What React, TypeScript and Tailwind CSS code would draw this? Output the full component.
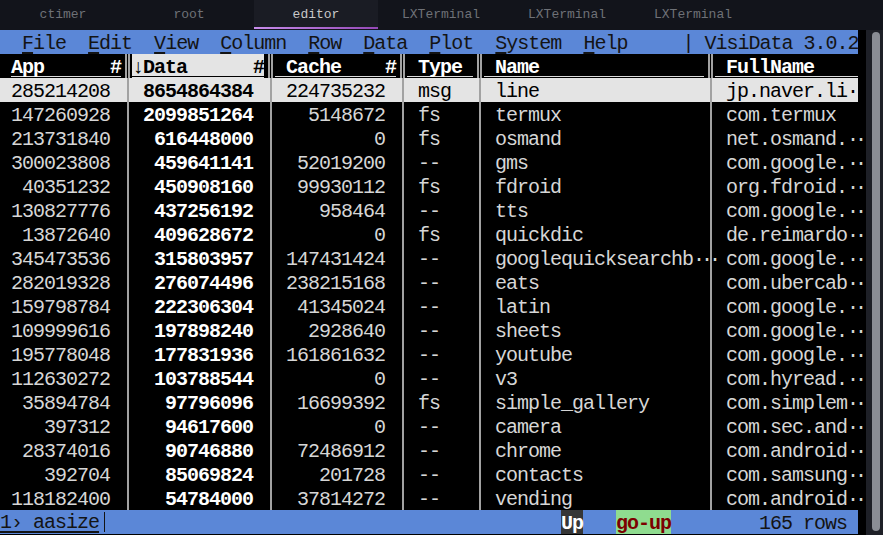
const tabs = ["ctimer", "root", "editor", "LXTerminal", "LXTerminal", "LXTerminal"];

// app, data, cache, type, name, fullname  (trailing "…" = truncated)
const rows: string[][] = [
  ["285214208", "8654864384", "224735232", "msg", "line", "jp.naver.li…"],
  ["147260928", "2099851264", "5148672", "fs", "termux", "com.termux"],
  ["213731840", "616448000", "0", "fs", "osmand", "net.osmand.…"],
  ["300023808", "459641141", "52019200", "--", "gms", "com.google.…"],
  ["40351232", "450908160", "99930112", "fs", "fdroid", "org.fdroid.…"],
  ["130827776", "437256192", "958464", "--", "tts", "com.google.…"],
  ["13872640", "409628672", "0", "fs", "quickdic", "de.reimardo…"],
  ["345473536", "315803957", "147431424", "--", "googlequicksearchb…", "com.google.…"],
  ["282019328", "276074496", "238215168", "--", "eats", "com.ubercab…"],
  ["159798784", "222306304", "41345024", "--", "latin", "com.google.…"],
  ["109999616", "197898240", "2928640", "--", "sheets", "com.google.…"],
  ["195778048", "177831936", "161861632", "--", "youtube", "com.google.…"],
  ["112630272", "103788544", "0", "--", "v3", "com.hyread.…"],
  ["35894784", "97796096", "16699392", "fs", "simple_gallery", "com.simplem…"],
  ["397312", "94617600", "0", "--", "camera", "com.sec.and…"],
  ["28374016", "90746880", "72486912", "--", "chrome", "com.android…"],
  ["392704", "85069824", "201728", "--", "contacts", "com.samsung…"],
  ["118182400", "54784000", "37814272", "--", "vending", "com.android…"],
];

const menu = ["File", "Edit", "View", "Column", "Row", "Data", "Plot", "System", "Help"];

function Val({ v }: { v: string }) {
  if (!v.endsWith("…")) return <>{v}</>;
  return (
    <>
      {v.slice(0, -1)}
      <span className="inline-block w-[11px] overflow-visible whitespace-nowrap tracking-[-4px]">···</span>
    </>
  );
}

function Sep() {
  return (
    <div className="w-[11px] h-full flex justify-center pl-[2px]">
      <div className="w-[2px] h-full bg-[#a2a2a2]" />
    </div>
  );
}

function HeadSep() {
  return (
    <div className="w-[11px] h-full flex justify-center pl-[2px]">
      <div className="w-[5px] h-full border-x-2 border-[#a2a2a2]" />
    </div>
  );
}

function DataRow({ r, sel }: { r: string[]; sel: boolean }) {
  const base = sel ? "bg-[#e4e4e4] text-black" : "text-[#d6d6d6]";
  return (
    <div className={`flex h-[24px] w-[858px] ${base}`}>
      <div className="w-[121px] text-right pr-[11px]">{r[0]}</div>
      <Sep />
      <div className={`w-[132px] text-right pr-[11px] font-bold ${sel ? "text-black" : "text-white"}`}>{r[1]}</div>
      <Sep />
      <div className="w-[121px] text-right pr-[11px]">{r[2]}</div>
      <Sep />
      <div className="w-[66px] pl-[11px]">{r[3]}</div>
      <Sep />
      <div className="w-[220px] pl-[11px] whitespace-nowrap">
        <Val v={r[4]} />
      </div>
      <Sep />
      <div className="w-[143px] pl-[11px] whitespace-nowrap">
        <Val v={r[5]} />
      </div>
    </div>
  );
}

export default function App() {
  return (
    <div className="w-[883px] h-[535px] bg-[#12141b] overflow-hidden flex flex-col font-['Liberation_Mono',monospace]">
      {/* tab bar */}
      <div className="h-[30px] flex">
        {tabs.map((t, i) => (
          <div
            key={i}
            className={`w-[126px] h-[29px] flex flex-col ${i === 2 ? "pl-[2px]" : ""}`}
          >
            <div
              className={`h-[27px] flex items-center justify-center pt-[2px] text-[13px] ${
                i === 2 ? "bg-[#1a1c24] text-[#c9c9c9]" : "text-[#6e7177]"
              }`}
            >
              {t}
            </div>
            {i === 2 && <div className="h-[2px] bg-linear-to-r from-[#c78ceb] to-[#9448b6]" />}
          </div>
        ))}
      </div>

      <div className="flex flex-1 min-h-0">
        {/* terminal */}
        <div className="w-[866px] bg-black text-[20px] tracking-[-1px] leading-[27px]">
          {/* menu */}
          <div className="h-[24px] w-[858px] bg-[#5b87d7] text-[#141414] whitespace-pre">
            {"  "}
            {menu.map((m, i) => (
              <span key={m}>
                <span className="underline underline-offset-[3px]">{m[0]}</span>
                {m.slice(1)}
                {i < menu.length - 1 ? "  " : ""}
              </span>
            ))}
            {"     | VisiData 3.0.2"}
          </div>

          {/* header */}
          <div className="flex h-[24px] w-[858px] font-bold text-white">
            <div className="w-[121px] pl-[11px]">
              <div className="h-[23px] flex justify-between border-b border-[#dcdcdc]">
                <span>App</span>
                <span>#</span>
              </div>
            </div>
            <HeadSep />
            <div className="w-[132px] bg-[#e4e4e4] text-black">
              <div className="h-[23px] flex justify-between border-b border-black">
                <span>
                  <span className="font-normal">↓</span>Data
                </span>
                <span>#</span>
              </div>
            </div>
            <HeadSep />
            <div className="w-[121px]">
              <div className="h-[23px] flex justify-between pl-[11px] border-b border-[#dcdcdc]">
                <span>Cache</span>
                <span>#</span>
              </div>
            </div>
            <HeadSep />
            <div className="w-[66px]">
              <div className="h-[23px] pl-[11px] border-b border-[#dcdcdc]">Type</div>
            </div>
            <HeadSep />
            <div className="w-[220px]">
              <div className="h-[23px] pl-[11px] border-b border-[#dcdcdc]">Name</div>
            </div>
            <HeadSep />
            <div className="w-[143px]">
              <div className="h-[23px] pl-[11px] border-b border-[#dcdcdc]">FullName</div>
            </div>
          </div>

          {rows.map((r, i) => (
            <DataRow key={i} r={r} sel={i === 0} />
          ))}

          {/* status */}
          <div className="flex h-[24px] w-[858px] bg-[#5b87d7] text-[#141414] whitespace-pre">
            <div className="w-[561px] flex items-center">
              <span className="underline underline-offset-[3px]">1› aasize</span>
              <span className="ml-[5px] w-[1px] h-[20px] bg-[#141414]" />
            </div>
            <div className="w-[22px] bg-[#363636] text-white font-bold">Up</div>
            <div className="w-[33px]" />
            <div className="w-[55px] bg-[#8fdc8f] text-[#7c0000] font-bold">go-up</div>
            <div className="flex-1 text-right pr-[11px]">165 rows</div>
          </div>
        </div>

        {/* scrollbar */}
        <div className="flex-1 bg-[#1e2027] pl-[6px] pt-[2px] pb-[4px]">
          <div className="w-[8px] h-full rounded-full bg-[#8b8e95]" />
        </div>
      </div>
    </div>
  );
}
